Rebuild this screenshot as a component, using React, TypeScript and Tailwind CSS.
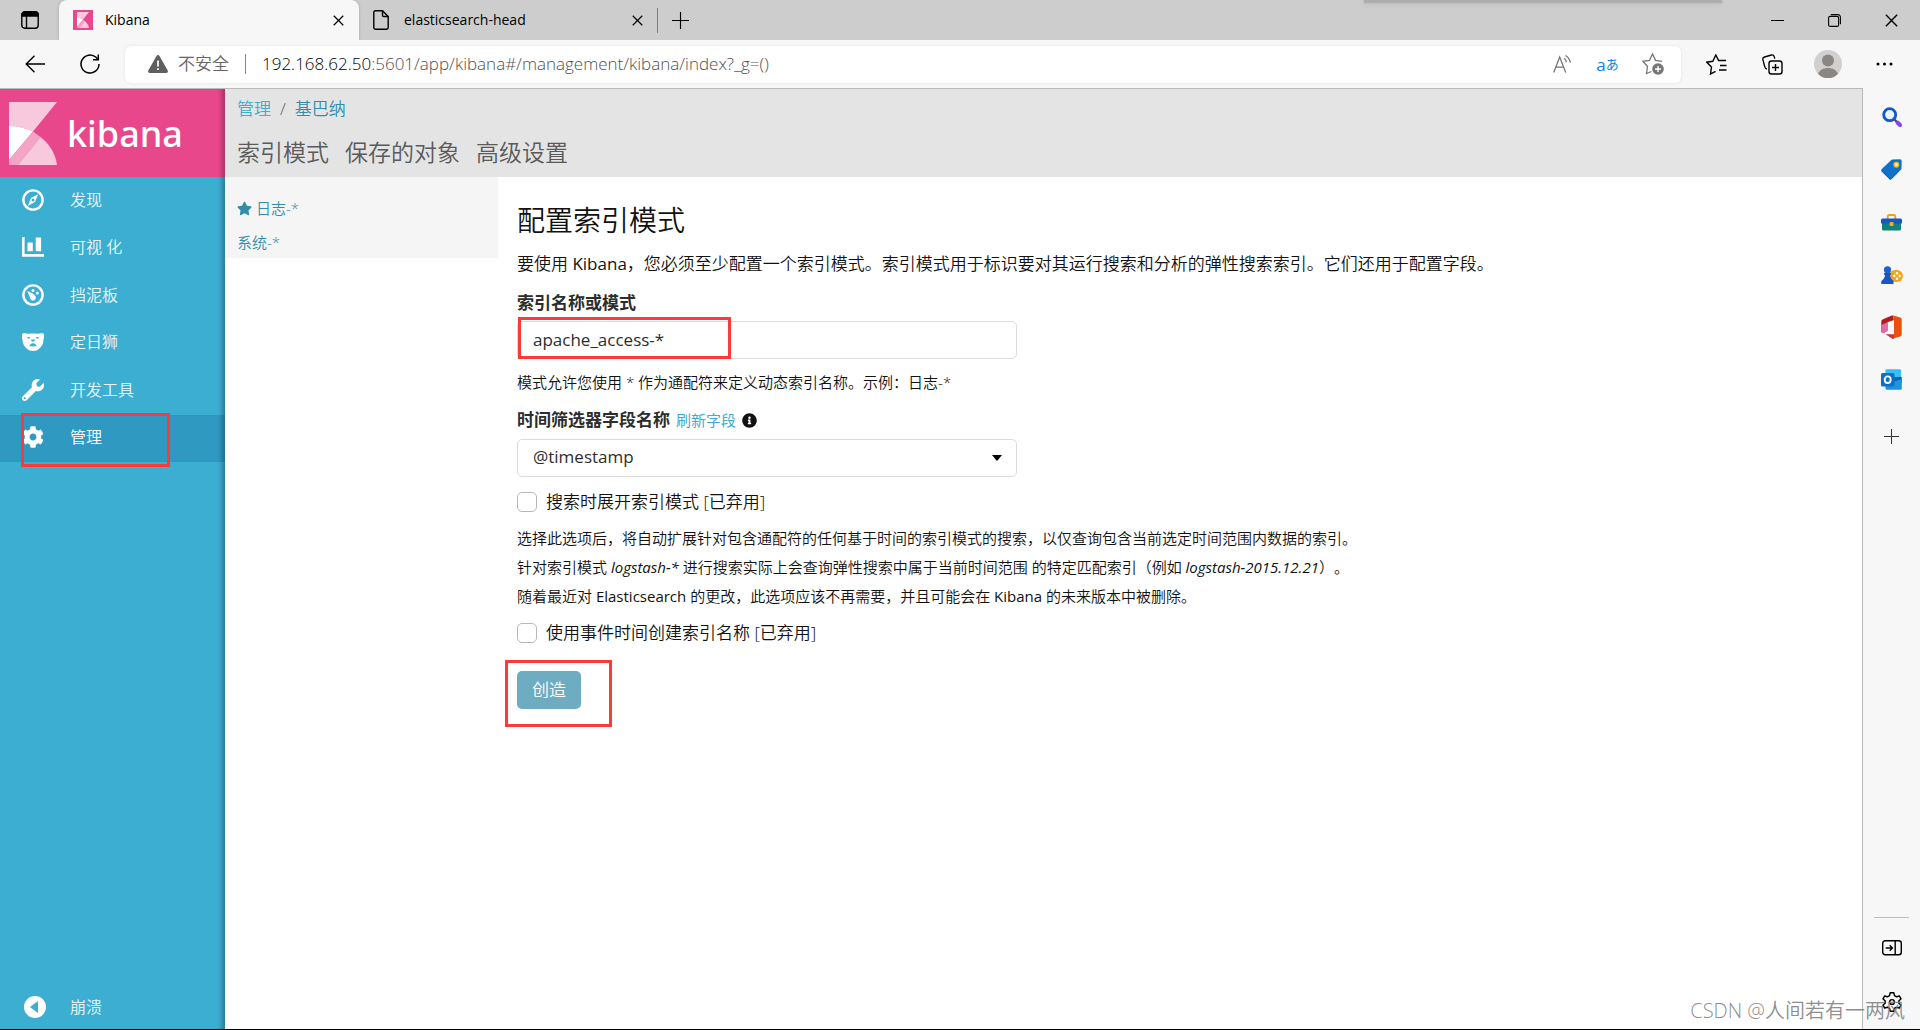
import type { ReactNode } from "react";
import { FaCog, FaInfoCircle, FaStar, FaWrench } from "react-icons/fa";

const navItems = [
  { label: "发现", icon: <CompassIcon /> },
  { label: "可视 化", icon: <ChartIcon /> },
  { label: "挡泥板", icon: <GaugeIcon /> },
  { label: "定日狮", icon: <BearIcon /> },
  { label: "开发工具", icon: <FaWrench className="size-[22px]" /> },
  { label: "管理", icon: <FaCog className="size-[22px]" />, active: true },
];

const tabs = ["索引模式", "保存的对象", "高级设置"];

function CompassIcon() {
  return (
    <svg viewBox="0 0 22 22" className="size-[22px]" fill="none">
      <circle cx="11" cy="11" r="9.6" stroke="currentColor" strokeWidth="2.4" />
      <path d="M16.2 5.2 13 13l-7.2 4L9 9Z" fill="currentColor" />
      <circle cx="11" cy="11" r="1.5" className="fill-[#3caed2]" />
    </svg>
  );
}

function ChartIcon() {
  return (
    <svg viewBox="0 0 22 20" className="h-5 w-[22px]" fill="currentColor">
      <path d="M0 0h2.6v17H22v2.8H0Z" />
      <path d="M5.5 5.500h5.300v8.800H5.500ZM13.700 0.400h5.400v13.900h-5.400Z" />
    </svg>
  );
}

function GaugeIcon() {
  return (
    <svg viewBox="0 0 22 22" className="size-[22px]" fill="currentColor">
      <circle cx="11" cy="11" r="9.6" fill="none" stroke="currentColor" strokeWidth="2.4" />
      <path d="M5 7.300c2.600.4 5.600 2 7.700 4a2.900 2.900 0 1 1-4.400 3.400C7.600 12 6.400 9.500 5 7.300Z" />
      <circle cx="11" cy="6.500" r="1.500" />
      <circle cx="15.300" cy="9" r="1.500" />
    </svg>
  );
}

function BearIcon() {
  return (
    <svg viewBox="0 0 22 18" className="h-[18px] w-[22px]">
      <path
        fill="currentColor"
        d="M0 1.800C0 .6 1 .3 2.500.3c2 0 3 .6 4.500.5C9 .3 13 .3 15 .8c1.500.1 2.500-.5 4.500-.5 1.500 0 2.500.3 2.500 1.500 0 2 .2 3.700-.6 5.200.1 3-1 5.800-3.200 7.700C16.200 16.700 14 18 11 18s-5.200-1.300-7.200-3.300C1.600 12.800.5 10 .6 7-.2 5.500 0 3.800 0 1.800Z"
      />
      <g className="fill-[#3caed2]">
        <path d="M5.500 4h2.300v1.500H5.500ZM14.200 4h2.300v1.500h-2.300ZM9 6.500h4l-.8 2H9.800Z" />
        <path d="M7.500 13.800c0-2.200 1.500-3.600 3.500-3.600s3.500 1.400 3.500 3.600c-1-.8-2-.4-3.500-.4s-2.500-.4-3.500.4Z" />
      </g>
    </svg>
  );
}

function KibanaMark({ className }: { className: string }) {
  return (
    <svg viewBox="0 0 48 63" preserveAspectRatio="none" className={className}>
      <path fill="#f8c8dd" d="M0 0h48L24 29.500C17 26 9 24 0 24Z" />
      <path fill="#fff" d="M0 24c9 0 17 2 24 5.500L0 58Z" />
      <path fill="#f3a4c7" d="M24 29.500 31.500 35 9 63H0v-5Z" />
      <path fill="#f8c8dd" d="M31.500 35C40.500 42 46.500 51.500 48 63H9Z" />
    </svg>
  );
}

function IconButton({ label, className = "", children }: { label: string; className?: string; children: ReactNode }) {
  return (
    <button type="button" aria-label={label} className={`flex shrink-0 items-center justify-center ${className}`}>
      {children}
    </button>
  );
}

function CloseGlyph({ className = "size-[11px]" }: { className?: string }) {
  return (
    <svg viewBox="0 0 12 12" className={className} fill="none" stroke="currentColor" strokeWidth="1.300">
      <path d="m.8.8 10.400 10.400M11.200.8.8 11.200" />
    </svg>
  );
}

function PlusGlyph({ className }: { className: string }) {
  return (
    <svg viewBox="0 0 18 18" className={className} fill="none" stroke="currentColor" strokeWidth="1.200">
      <path d="M9 0v18M0 9h18" />
    </svg>
  );
}

function TabStrip() {
  return (
    <div className="relative flex h-10 items-center bg-[#cdcdcd] text-black">
      <div className="absolute top-0 right-[198px] h-[3px] w-[358px] bg-[#adadad] shadow-[0_0_4px_#adadad]" />
      <IconButton label="标签页操作菜单" className="h-full w-[59px]">
        <svg viewBox="0 0 18 18" className="size-[18px]" fill="none" stroke="currentColor" strokeWidth="1.400">
          <rect x=".8" y=".8" width="16.400" height="16.400" rx="3" />
          <path d="M1 3.500A2.500 2.500 0 0 1 3.500 1h11A2.500 2.500 0 0 1 17 3.500V5H1Z" fill="currentColor" />
          <path d="M5.500 5v12" />
        </svg>
      </IconButton>
      <div className="flex h-full w-[300px] items-center rounded-t-lg bg-[#f7f7f7] pr-3 pl-[14px] shadow-[0_0_3px_#a0a0a0] [clip-path:inset(0_-4px_0_-4px)]">
        <span className="flex size-5 items-center justify-center bg-[#e8488b]">
          <KibanaMark className="h-4 w-3" />
        </span>
        <span className="ml-3 flex-1 text-sm font-normal">Kibana</span>
        <IconButton label="关闭 Kibana" className="size-[18px]">
          <CloseGlyph />
        </IconButton>
      </div>
      <div className="flex h-full w-[298px] items-center pr-[11px] pl-[14px]">
        <svg viewBox="0 0 16 20" className="h-5 w-4" fill="none" stroke="currentColor" strokeWidth="1.400">
          <path d="M.8 2.500A1.700 1.700 0 0 1 2.500.8H9.500l5.700 5.700v11a1.700 1.700 0 0 1-1.700 1.700h-11a1.700 1.700 0 0 1-1.700-1.700Z" />
          <path d="M9.500.8v4.500c0 .8.400 1.200 1.200 1.200h4.500" />
        </svg>
        <span className="ml-[15px] flex-1 text-sm font-normal">elasticsearch-head</span>
        <IconButton label="关闭 elasticsearch-head" className="size-[18px]">
          <CloseGlyph />
        </IconButton>
      </div>
      <div className="h-[25px] w-px bg-[#7d7d7d]" />
      <IconButton label="新建标签页" className="h-full w-11">
        <PlusGlyph className="size-[17px]" />
      </IconButton>
      <div className="ml-auto flex h-full">
        <IconButton label="最小化" className="w-[57px]">
          <span className="h-px w-[13px] bg-black" />
        </IconButton>
        <IconButton label="还原" className="w-[57px]">
          <svg viewBox="0 0 13 13" className="size-[13px]" fill="none" stroke="currentColor" strokeWidth="1.100">
            <rect x=".6" y="2.400" width="10" height="10" rx="1.500" />
            <path d="M2.800.6h7.200a2.400 2.400 0 0 1 2.400 2.400v7.200" />
          </svg>
        </IconButton>
        <IconButton label="关闭" className="w-[57px]">
          <CloseGlyph className="size-[13px]" />
        </IconButton>
      </div>
    </div>
  );
}

function Toolbar() {
  return (
    <div className="flex h-12 items-center bg-[#f7f7f7] text-black">
      <IconButton label="返回" className="ml-[15px] size-10">
        <svg viewBox="0 0 20 18" className="h-[18px] w-5" fill="none" stroke="currentColor" strokeWidth="1.400">
          <path d="M20 9H1M9.500.8 1.200 9l8.300 8.200" />
        </svg>
      </IconButton>
      <IconButton label="刷新" className="ml-[15px] size-10">
        <svg viewBox="0 0 20 20" className="size-5" fill="none" stroke="currentColor" strokeWidth="1.500">
          <path d="M19 10a9 9 0 1 1-3-6.700l2 2" />
          <path d="M18.300.5v5.300H13" />
        </svg>
      </IconButton>
      <div className="ml-[15px] flex h-[37px] flex-1 items-center rounded-md bg-white pr-1.5 pl-[23px] shadow-[0_0_3px_#e0e0e0]">
        <svg viewBox="0 0 20 18" className="h-[18px] w-5">
          <path fill="#5f5f5f" d="M8.500 1a1.700 1.700 0 0 1 3 0l8.200 14.500A1.700 1.700 0 0 1 18.200 18H1.800a1.700 1.700 0 0 1-1.500-2.500Z" />
          <path stroke="#fff" strokeWidth="1.700" d="M10 5.500v6M10 13.300V15" />
        </svg>
        <span className="ml-2.5 text-[17px] text-[#666]">不安全</span>
        <span className="mx-4 h-5 w-px shrink-0 bg-[#888]" />
        <p className="flex-1 text-[17px] text-[#4f4f4f]">
          <span className="text-black">192.168.62.50</span>:5601/app/kibana#/management/kibana/index?_g=()
        </p>
        <IconButton label="大声朗读" className="size-[45px] text-[#767676]">
          <svg viewBox="0 0 19 18" className="h-[18px] w-[19px]" fill="none" stroke="currentColor" strokeWidth="1.300">
            <path d="M.7 17.500 6.700 2l6 15.500M2.800 12.200h7.800M11 3.200c1.500 1 2.300 2.300 2.500 4M12.500.5c2.600 1.700 4.400 4.200 5 7.200" />
          </svg>
        </IconButton>
        <IconButton label="翻译" className="size-[45px] text-[17px] leading-none font-normal text-[#0a84e0]">
          a<span className="text-[13px]">あ</span>
        </IconButton>
        <IconButton label="添加到收藏夹" className="size-[45px] text-[#767676]">
          <svg viewBox="0 0 22 22" className="size-[22px]" fill="none">
            <path stroke="currentColor" strokeWidth="1.300" d="M9.500 18.500 4.500 20.500l1-7L1 8.300l6.500-1L10.500 1l3 6.300 6.500 1" />
            <circle cx="16" cy="16" r="5.800" fill="currentColor" />
            <path stroke="#fff" strokeWidth="1.400" d="M16 13v6M13 16h6" />
          </svg>
        </IconButton>
      </div>
      <div className="flex items-center pr-2 pl-[7px]">
        <IconButton label="收藏夹" className="h-10 w-14">
          <svg viewBox="0 0 21 21" className="size-[21px]" fill="none" stroke="currentColor" strokeWidth="1.400">
            <path d="m9.500 17.300-5 2.700 1-7L.8 8.200l6-.9L9.800 1l2.800 5.500H20M14 11.500h6.500M13 16h7.500" />
          </svg>
        </IconButton>
        <IconButton label="集锦" className="h-10 w-14">
          <svg viewBox="0 0 21 21" className="size-[21px]" fill="none" stroke="currentColor" strokeWidth="1.400">
            <rect x="7" y="7" width="13" height="13" rx="2.500" />
            <path d="M13.500 10v7M10 13.500h7M5 15c-1.300-.2-1.900-1-2.200-2.200L.9 5.700c-.3-1.300.3-2.300 1.600-2.700l7-2c1.300-.3 2.300.3 2.700 1.600l.6 2" />
          </svg>
        </IconButton>
        <IconButton label="个人资料" className="h-10 w-14">
          <svg viewBox="0 0 28 28" className="size-7">
            <circle cx="14" cy="14" r="14" fill="#d2d0ce" />
            <circle cx="14" cy="10.500" r="6" fill="#8a8683" />
            <path fill="#8a8683" d="M4 24c1.500-4 5.500-6 10-6s8.500 2 10 6a14 14 0 0 1-20 0Z" />
          </svg>
        </IconButton>
        <IconButton label="设置及其他" className="h-10 w-14">
          <svg viewBox="0 0 17 4" className="h-1 w-[17px]" fill="currentColor">
            <circle cx="2" cy="2" r="1.500" />
            <circle cx="8.500" cy="2" r="1.500" />
            <circle cx="15" cy="2" r="1.500" />
          </svg>
        </IconButton>
      </div>
    </div>
  );
}

function EdgeSidebar() {
  return (
    <aside className="flex w-[58px] shrink-0 flex-col items-center border-l border-[#b9b9b9] bg-[#f7f7f7] py-0.5 text-black">
      <IconButton label="搜索" className="h-[53px] w-full">
        <svg viewBox="0 0 20 20" className="size-5" fill="none">
          <path stroke="#8a3ffc" strokeWidth="4" strokeLinecap="round" d="m15.500 15.500 2.500 2.500" />
          <path stroke="#444" strokeWidth="2" d="m12 12 2.500 2.500" />
          <circle cx="7.700" cy="7.700" r="6" stroke="#1058ce" strokeWidth="2.800" fill="#eaf5ff" />
        </svg>
      </IconButton>
      <IconButton label="购物" className="h-[53px] w-full">
        <svg viewBox="0 0 21 21" className="size-[21px]">
          <path fill="#1170c9" d="M11.500.5 19 .3A1.700 1.700 0 0 1 20.700 2l-.2 7.500a2 2 0 0 1-.6 1.300l-9 9.200a1.700 1.700 0 0 1-2.400 0L.8 12.500a1.700 1.700 0 0 1 0-2.400L10 1.200c.4-.4.900-.6 1.500-.7Z" />
          <path fill="#0a4fae" d="M.5 11.500 10 20.500c-.6.400-1.200.1-1.700-.4L.8 12.600Z" />
          <circle cx="15.300" cy="5.700" r="2.200" fill="#fff" stroke="#fcb61b" strokeWidth="1.500" />
        </svg>
      </IconButton>
      <IconButton label="工具" className="h-[53px] w-full">
        <svg viewBox="0 0 21 17" className="h-[17px] w-[21px]">
          <path fill="none" stroke="#e8a21a" strokeWidth="1.800" d="M6.700 5V2.500A1.500 1.500 0 0 1 8.200 1h4.600a1.500 1.500 0 0 1 1.500 1.500V5" />
          <path fill="#12807d" d="M1 9h19v6a1.500 1.500 0 0 1-1.500 1.500h-16A1.500 1.500 0 0 1 1 15Z" />
          <path fill="#1658c4" d="M1.500 4.500h18A1.500 1.500 0 0 1 21 6v3.500H0V6a1.500 1.500 0 0 1 1.500-1.500Z" />
          <rect x="8.700" y="8" width="3.800" height="4" rx=".8" fill="#f8ac1c" />
        </svg>
      </IconButton>
      <IconButton label="游戏" className="h-[52px] w-full">
        <svg viewBox="0 0 22 18" className="h-[18px] w-[22px]">
          <rect x="8" y="4" width="14" height="12" rx="6" fill="#f0a51e" />
          <g fill="#fff">
            <circle cx="16" cy="7.300" r="1.200" />
            <circle cx="16" cy="12.700" r="1.200" />
            <circle cx="13.300" cy="10" r="1.200" />
            <circle cx="18.700" cy="10" r="1.200" />
          </g>
          <circle cx="6.500" cy="3.800" r="3.600" fill="#1c62d2" />
          <path fill="#1c55c0" d="M3 7h7v1.800H9c0 2.500 1 4 3.500 6.200V18H.3v-3C3 13 4 11.300 4 8.800H3Z" />
        </svg>
      </IconButton>
      <IconButton label="Office" className="h-[52px] w-full">
        <svg viewBox="0 0 21 24" className="h-6 w-[21px]">
          <path fill="#e8500c" d="m11.500.2 7.700 2.300a2 2 0 0 1 1.500 2v15a2 2 0 0 1-1.500 2L11.500 23.800 13 21V4Z" />
          <path fill="#b4191e" d="M11.500.2 13 5 6.500 7.300v8.500l-3.300 2C1.400 18.600.3 17.500.3 16V7c0-1.200.6-2.200 1.700-2.700Z" />
          <path fill="#e56ba8" d="m.3 10 6.200-2.700v8.500l-3.300 2C1.400 18.600.3 17.500.3 16Z" />
          <path fill="#d52b45" d="M4.500 19.200H13v4.400c-.6.300-1.300.3-2 0Z" />
        </svg>
      </IconButton>
      <IconButton label="Outlook" className="h-[53px] w-full">
        <svg viewBox="0 0 21 21" className="size-[21px]">
          <rect x="4.500" y=".3" width="15.500" height="14" rx="1" fill="#38bdf5" />
          <path fill="#0a5fae" d="M4.500 8h16.300v6H4.500Z" />
          <path fill="#1e94e0" d="M20.800 10v9.300a1.500 1.500 0 0 1-1.500 1.500H6a1.500 1.500 0 0 1-1.500-1.500V15Z" />
          <rect y="4" width="13.500" height="13.500" rx="1.500" fill="#0c70cb" />
          <ellipse cx="6.700" cy="10.700" rx="3" ry="3.300" fill="none" stroke="#fff" strokeWidth="1.800" />
        </svg>
      </IconButton>
      <IconButton label="添加" className="h-[60px] w-full text-[#333]">
        <PlusGlyph className="size-[15px]" />
      </IconButton>
      <div className="mt-auto h-px w-[35px] bg-[#bdbdbd]" />
      <IconButton label="隐藏侧栏" className="h-[59px] w-full">
        <svg viewBox="0 0 20 16" className="h-4 w-5" fill="none" stroke="currentColor" strokeWidth="1.400">
          <rect x=".7" y=".8" width="18.600" height="14" rx="2.500" />
          <path d="M13.200 1v14M3.700 8h6.500M7.700 5.300 10.400 8l-2.700 2.700" />
        </svg>
      </IconButton>
      <IconButton label="侧栏设置" className="h-[50px] w-full">
        <svg viewBox="0 0 24 24" className="size-[22px]" fill="none" stroke="currentColor" strokeWidth="1.600">
          <path d="m10 2-.7 3-2.300 1.300L4 5.400 2.200 8.700l2.300 2v2.600l-2.300 2L4 18.600l3-.9L9.300 19l.7 3h4l.7-3 2.300-1.300 3 .9 1.800-3.300-2.300-2v-2.600l2.300-2L20 5.400l-3 .9L14.700 5 14 2Z" strokeLinejoin="round" />
          <circle cx="12" cy="12" r="2.600" />
        </svg>
      </IconButton>
    </aside>
  );
}

function KibanaNav() {
  return (
    <nav className="flex w-[225px] shrink-0 flex-col bg-[#3caed2] text-white shadow-[inset_-7px_0_5px_-4px_rgba(0,0,0,0.3)]">
      <a href="#/" className="flex h-[88px] items-center bg-[#e8488b] pl-[9px] shadow-[inset_-7px_0_5px_-4px_rgba(0,0,0,0.3)]">
        <KibanaMark className="h-[63px] w-12" />
        <span className="ml-[10px] pt-0.5 font-['Noto_Sans'] text-[36px] leading-none font-medium">kibana</span>
      </a>
      <ul className="grid h-[285px] grid-rows-6 text-base">
        {navItems.map((item) => (
          <li key={item.label} className={item.active ? "relative bg-[#2f99c1] shadow-[inset_-7px_0_5px_-4px_rgba(0,0,0,0.3)]" : "text-[#eaf7fb]"}>
            <a href="#/" className="flex h-full items-center pb-0.5 pl-[22px]">
              <span className="mr-[26px] w-[22px] text-white">{item.icon}</span>
              {item.label}
            </a>
            {item.active && <span className="pointer-events-none absolute -top-0.5 left-[21px] h-[54px] w-[149px] border-3 border-[#fb3b38]" />}
          </li>
        ))}
      </ul>
      <button type="button" className="mt-auto flex h-11 items-center pl-6 text-left text-base text-[#eaf7fb]">
        <svg viewBox="0 0 22 22" className="mr-6 size-[22px]">
          <circle cx="11" cy="11" r="11" fill="#fff" />
          <path fill="#3caed2" d="M14 5v12l-8-6Z" />
        </svg>
        崩溃
      </button>
    </nav>
  );
}

function CheckRow({ id, label }: { id: string; label: string }) {
  return (
    <div className="flex items-center gap-[9px]">
      <input id={id} type="checkbox" className="size-5 appearance-none rounded-[5px] border border-[#b8b8b8] bg-white" />
      <label htmlFor={id} className="text-[17px] leading-6">{label}</label>
    </div>
  );
}

function IndexPatternForm() {
  return (
    <main className="flex-1 pt-[25px] pl-[19px]">
      <h1 className="text-[28px] leading-9 text-[#111]">配置索引模式</h1>
      <p className="mt-[14px] text-[17px] leading-6">
        要使用 <span className="font-normal">Kibana</span>，您必须至少配置一个索引模式。索引模式用于标识要对其运行搜索和分析的弹性搜索索引。它们还用于配置字段。
      </p>
      <form onSubmit={(e) => e.preventDefault()}>
        <label htmlFor="pattern" className="mt-[15px] block text-[17px] leading-6 font-bold text-[#2d2d2d]">索引名称或模式</label>
        <div className="relative mt-1.5 w-[500px]">
          <input
            id="pattern"
            defaultValue="apache_access-*"
            className="h-[38px] w-full rounded-[5px] border border-[#dcdcdc] bg-white px-[15px] pb-0.5 text-[17px] font-normal text-[#2d2d2d]"
          />
          <span className="pointer-events-none absolute -top-1 left-px h-[42px] w-[213px] border-3 border-[#fb3b38]" />
        </div>
        <p className="mt-[11px] text-[15px] leading-6">模式允许您使用 * 作为通配符来定义动态索引名称。示例：日志-*</p>
        <div className="mt-[14px] flex items-center gap-1.5 leading-6">
          <label htmlFor="timefield" className="text-[17px] font-bold text-[#2d2d2d]">时间筛选器字段名称</label>
          <a href="#/" className="text-[15px] font-normal text-[#3caed2]">刷新字段</a>
          <FaInfoCircle className="size-[15px]" />
        </div>
        <div className="relative mt-[7px] w-[500px]">
          <select
            id="timefield"
            className="h-[38px] w-full appearance-none rounded-[5px] border border-[#dcdcdc] bg-white px-[15px] pb-0.5 text-[17px] font-normal text-[#2d2d2d]"
          >
            <option>@timestamp</option>
          </select>
          <svg viewBox="0 0 10 6" className="pointer-events-none absolute top-4 right-[15px] h-1.5 w-2.5">
            <path d="M0 0h10L5 6Z" />
          </svg>
        </div>
        <div className="mt-[13px]">
          <CheckRow id="expand" label="搜索时展开索引模式 [已弃用]" />
        </div>
        <div className="my-2.5 text-[15px] leading-[29px] [text-spacing-trim:space-all]">
          <p>选择此选项后，将自动扩展针对包含通配符的任何基于时间的索引模式的搜索，以仅查询包含当前选定时间范围内数据的索引。</p>
          <p>
            针对索引模式 <em className="font-normal">logstash-*</em> 进行搜索实际上会查询弹性搜索中属于当前时间范围 的特定匹配索引（例如{" "}
            <em className="font-normal">logstash-2015.12.21</em>）。
          </p>
          <p>
            随着最近对 <span className="font-normal">Elasticsearch</span> 的更改，此选项应该不再需要，并且可能会在{" "}
            <span className="font-normal">Kibana</span> 的未来版本中被删除。
          </p>
        </div>
        <CheckRow id="eventtimes" label="使用事件时间创建索引名称 [已弃用]" />
        <div className="relative mt-[26px] w-fit">
          <button type="submit" className="h-[38px] rounded-[5px] bg-[#6eadc1] px-[15px] text-[17px] text-white">创造</button>
          <span className="pointer-events-none absolute -top-[11px] -left-3 h-[67px] w-[107px] border-3 border-[#fb3b38]" />
        </div>
      </form>
    </main>
  );
}

export default function App() {
  return (
    <div
      lang="zh-CN"
      className="relative flex min-h-screen flex-col border-b border-black bg-white font-['Open_Sans','Noto_Sans_CJK_SC',sans-serif] font-[350] text-[#111]"
    >
      <TabStrip />
      <Toolbar />
      <div className="flex flex-1 bg-white">
        <div className="flex min-w-0 flex-1 border-t border-[#b9b9b9]">
          <KibanaNav />
          <div className="flex min-w-0 flex-1 flex-col">
            <header className="h-[88px] bg-[#e4e4e4] px-3 pt-2">
              <div className="flex gap-[9px] text-[17px] leading-6">
                <a href="#/" className="text-[#3caed2]">管理</a>
                <span className="text-[#5a5a5a]">/</span>
                <a href="#/" className="text-[#328caa]">基巴纳</a>
              </div>
              <div className="mt-[15px] flex gap-4 text-[23px] leading-8 text-[#5a5a5a]">
                {tabs.map((tab) => (
                  <a key={tab} href="#/">{tab}</a>
                ))}
              </div>
            </header>
            <div className="flex">
              <ul className="h-[81px] w-[273px] shrink-0 bg-[#f5f5f5] px-3 pt-[14px] text-[15px] leading-[34px] text-[#328caa]">
                <li>
                  <a href="#/" className="flex items-center gap-1">
                    <FaStar className="size-[15px]" />
                    日志-*
                  </a>
                </li>
                <li>
                  <a href="#/">系统-*</a>
                </li>
              </ul>
              <IndexPatternForm />
            </div>
          </div>
        </div>
        <EdgeSidebar />
      </div>
      <div className="pointer-events-none absolute right-[15px] bottom-0.5 text-xl leading-8 text-[#808080]/90">CSDN @人间若有一两风</div>
    </div>
  );
}
